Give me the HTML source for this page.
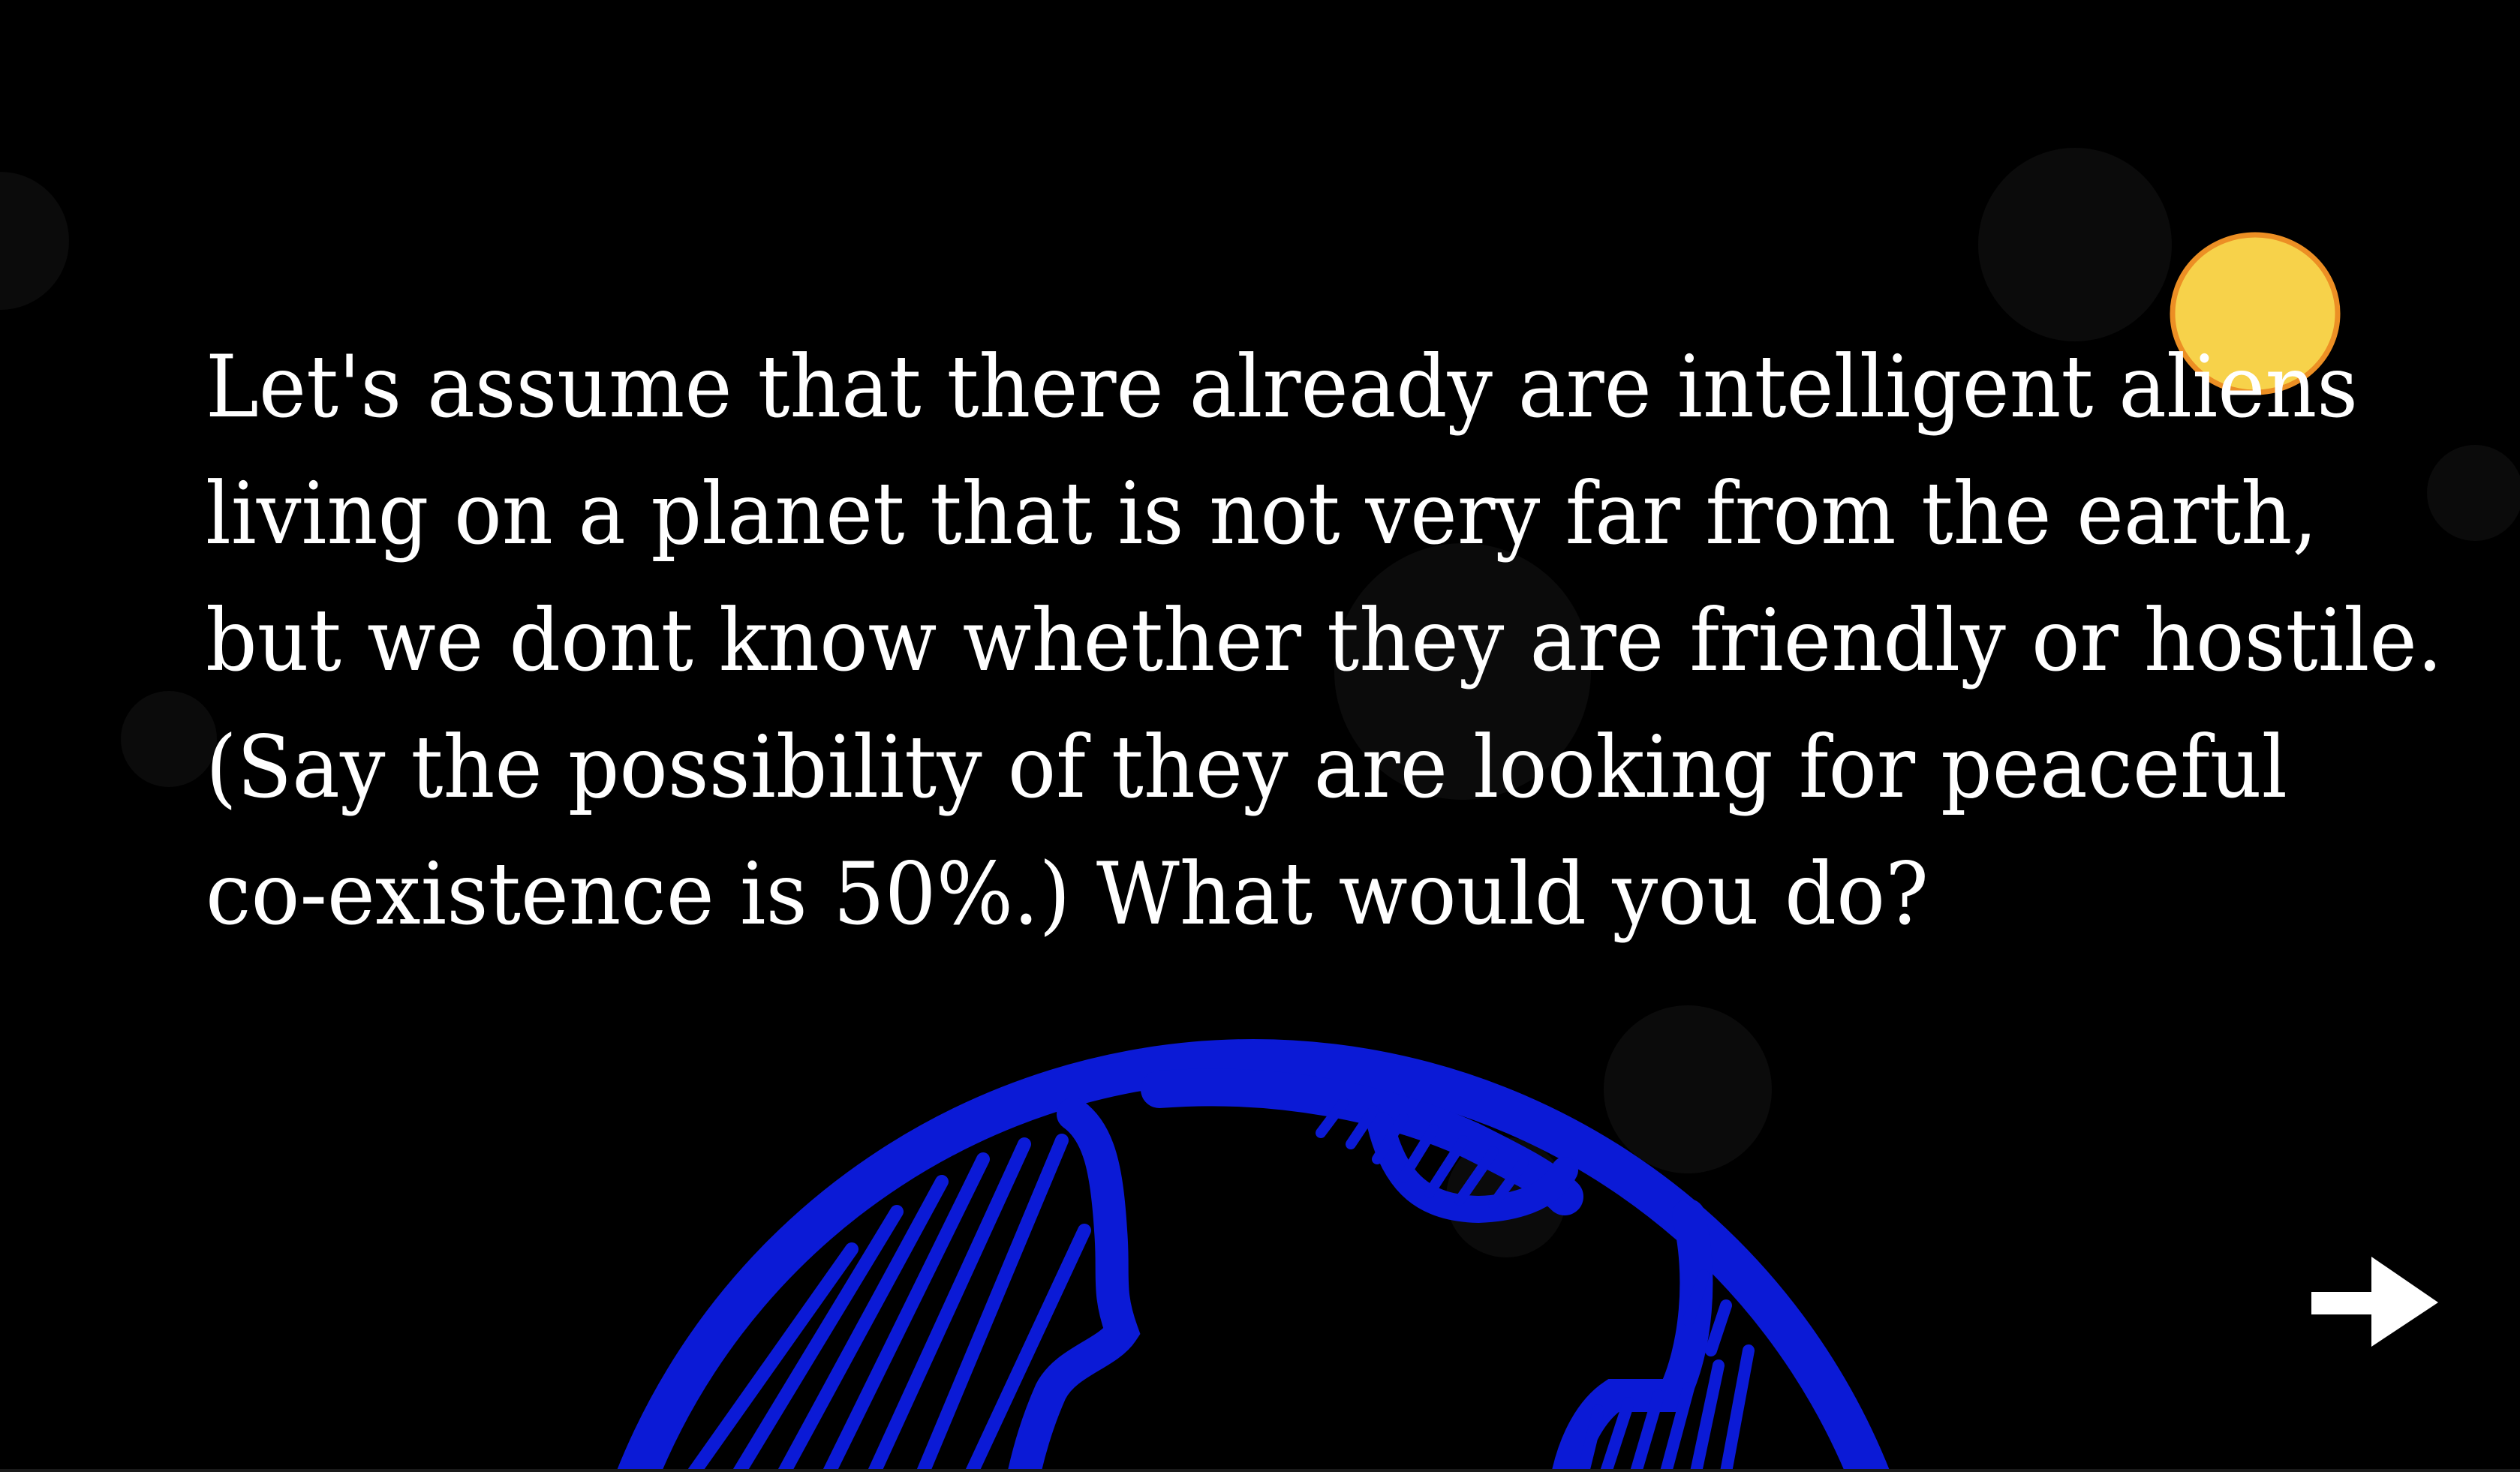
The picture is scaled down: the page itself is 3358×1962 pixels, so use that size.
<!DOCTYPE html>
<html><head><meta charset="utf-8"><style>
html,body{margin:0;padding:0;background:#000;width:3358px;height:1962px;overflow:hidden;}
body{position:relative;}
svg{position:absolute;left:0;top:0;display:block;overflow:hidden;}
</style></head><body>
<svg width="3358" height="1962" viewBox="0 0 3358 1962">
<rect width="3358" height="1962" fill="#000"/>
<g fill="#0b0b0b">
<circle cx="2765" cy="326" r="129"/>
<circle cx="1949" cy="895" r="171"/>
<circle cx="2249" cy="1452" r="112"/>
<circle cx="2007" cy="1596" r="80"/>
<circle cx="0" cy="321" r="92"/>
<circle cx="3298" cy="657" r="64"/>
<circle cx="225" cy="985" r="64"/>
</g>
<ellipse cx="3005" cy="418" rx="110" ry="105" fill="#f7d24a" stroke="#ec8f24" stroke-width="7"/>
<g fill="none" stroke="#0b1ad6" stroke-linecap="round">
<circle cx="1670" cy="2298" r="885" stroke-width="56"/>
<path d="M1545 1452 C1700 1440 1850 1470 1960 1520 C2020 1550 2060 1570 2085 1595" stroke-width="50"/>
<path d="M1840 1500 C1860 1580 1900 1610 1970 1612 C2030 1610 2070 1590 2085 1560" stroke-width="36"/>
<path d="M1790 1470 L1760 1510 M1830 1480 L1800 1525 M1870 1490 L1835 1545 M1910 1505 L1870 1570 M1950 1520 L1905 1590 M1990 1535 L1945 1600 M2030 1550 L1990 1605" stroke-width="14"/>
<path d="M1430 1485 C1465 1510 1475 1560 1480 1640 C1485 1700 1475 1720 1495 1775 C1475 1805 1420 1815 1400 1855 C1380 1900 1370 1940 1365 1962" stroke-width="44"/>
<path d="M1415 1520 L1230 1962 M1365 1525 L1165 1962 M1310 1545 L1105 1962 M1255 1575 L1045 1962 M1195 1615 L985 1962 M1135 1665 L925 1962 M1445 1640 L1295 1962" stroke-width="18"/>
<path d="M2250 1620 C2270 1700 2260 1800 2230 1860 L2150 1860 C2120 1880 2100 1920 2090 1962" stroke-width="44"/>
<path d="M2130 1880 L2110 1962 M2170 1870 L2140 1962 M2210 1860 L2180 1962 M2250 1850 L2220 1962 M2290 1820 L2260 1962 M2330 1800 L2300 1962 M2270 1700 L2250 1760 M2300 1740 L2280 1800" stroke-width="16"/>
</g>
<g fill="#fff" font-family="'DejaVu Serif',serif" font-size="114">
<text x="274" y="555" textLength="2868" lengthAdjust="spacingAndGlyphs">Let's assume that there already are intelligent aliens</text>
<text x="274" y="724" textLength="2814" lengthAdjust="spacingAndGlyphs">living on a planet that is not very far from the earth,</text>
<text x="274" y="893" textLength="2981" lengthAdjust="spacingAndGlyphs">but we dont know whether they are friendly or hostile.</text>
<text x="274" y="1062" textLength="2774" lengthAdjust="spacingAndGlyphs">(Say the possibility of they are looking for peaceful</text>
<text x="274" y="1231" textLength="2296" lengthAdjust="spacingAndGlyphs">co-existence is 50%.) What would you do?</text>
</g>
<g fill="#fff">
<rect x="3080" y="1722" width="82" height="30"/>
<polygon points="3160,1675 3249,1736 3160,1795"/>
</g>
<rect x="0" y="1958" width="3358" height="4" fill="#1a1a1a"/>
</svg>
</body></html>
